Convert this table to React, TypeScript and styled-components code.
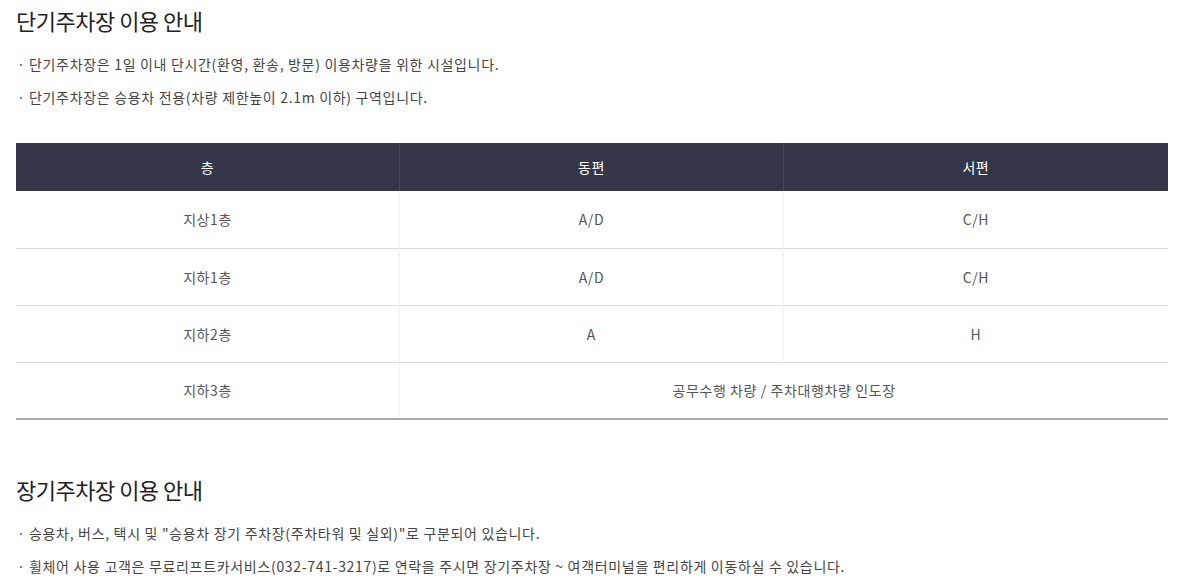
import React from 'react'
import styled, { createGlobalStyle } from 'styled-components'

const GlobalStyle = createGlobalStyle`
    body {
        margin: 0;
        background: #fff;
        font-family: 'Noto Sans CJK KR', 'Noto Sans', sans-serif;
        color: #333;
    }
    * {
        box-sizing: border-box;
    }
`

type Row = { floor: string; east: string; west?: string }

const rows: Row[] = [
    { floor: '지상1층', east: 'A/D', west: 'C/H' },
    { floor: '지하1층', east: 'A/D', west: 'C/H' },
    { floor: '지하2층', east: 'A', west: 'H' },
    { floor: '지하3층', east: '공무수행 차량 / 주차대행차량 인도장' },
]

export default function App() {
    return (
        <>
            <GlobalStyle />
            <Page>
                <Section>
                    <Title>단기주차장 이용 안내</Title>
                    <List>
                        <Item>단기주차장은 1일 이내 단시간(환영, 환송, 방문) 이용차량을 위한 시설입니다.</Item>
                        <Item>단기주차장은 승용차 전용(차량 제한높이 2.1m 이하) 구역입니다.</Item>
                    </List>
                    <Table>
                        <colgroup>
                            <col style={{ width: '33.3%' }} />
                            <col style={{ width: '33.3%' }} />
                            <col />
                        </colgroup>
                        <thead>
                            <tr>
                                <Th>층</Th>
                                <Th>동편</Th>
                                <Th>서편</Th>
                            </tr>
                        </thead>
                        <tbody>
                            {rows.map((r) => (
                                <tr key={r.floor}>
                                    <Td>{r.floor}</Td>
                                    {r.west ? (
                                        <>
                                            <Td>{r.east}</Td>
                                            <Td>{r.west}</Td>
                                        </>
                                    ) : (
                                        <Td colSpan={2}>{r.east}</Td>
                                    )}
                                </tr>
                            ))}
                        </tbody>
                    </Table>
                </Section>
                <Section>
                    <Title>장기주차장 이용 안내</Title>
                    <List>
                        <Item>승용차, 버스, 택시 및 "승용차 장기 주차장(주차타워 및 실외)"로 구분되어 있습니다.</Item>
                        <Item>휠체어 사용 고객은 무료리프트카서비스(032-741-3217)로 연락을 주시면 장기주차장 ~ 여객터미널을 편리하게 이동하실 수 있습니다.</Item>
                    </List>
                </Section>
            </Page>
        </>
    )
}

const Page = styled.div`
    padding: 4px 17px 0 16px;
    display: flex;
    flex-direction: column;
    gap: 53px;
`
const Section = styled.section`
    display: flex;
    flex-direction: column;
`
const Title = styled.h2`
    margin: 0;
    font-size: 22px;
    font-weight: 400;
    line-height: 32px;
    color: #222;
    letter-spacing: -0.5px;
`
const List = styled.ul`
    list-style: none;
    margin: 17px 0 0;
    padding: 0;
    display: flex;
    flex-direction: column;
    gap: 11px;
`
const Item = styled.li`
    position: relative;
    padding-left: 13px;
    font-size: 14px;
    line-height: 22px;
    color: #444;
    letter-spacing: 0.68px;
    &::before {
        content: '·';
        position: absolute;
        left: 1px;
        top: 0;
        color: #666;
    }
`
const Table = styled.table`
    margin-top: 35px;
    width: 100%;
    border-collapse: collapse;
    table-layout: fixed;
    border-bottom: 2px solid #aaa;
`
const Th = styled.th`
    height: 48px;
    background: #343749;
    color: #fff;
    font-size: 14px;
    font-weight: 400;
    letter-spacing: 0.6px;
    text-align: center;
    border-left: 1px solid #45485a;
    &:first-child {
        border-left: none;
    }
`
const Td = styled.td`
    height: 57px;
    font-size: 14px;
    color: #555;
    letter-spacing: 0.6px;
    text-align: center;
    border-top: 1px solid #ddd;
    border-left: 1px solid #f2f2f2;
    &:first-child {
        border-left: none;
    }
    tr:first-child > & {
        border-top: none;
    }
`
